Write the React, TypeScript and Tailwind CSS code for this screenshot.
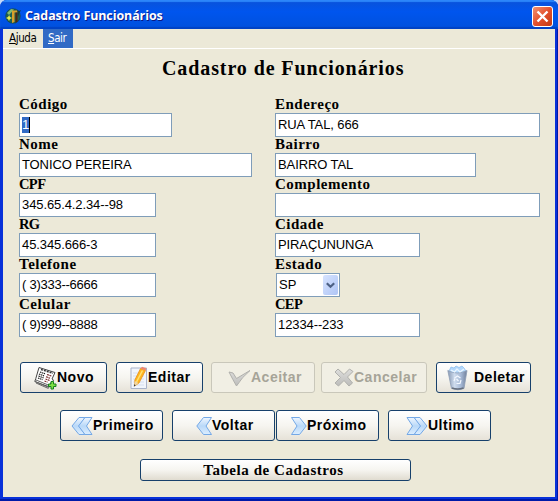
import React from "react";

const serif = "font-['Liberation_Serif',serif] font-bold text-black whitespace-nowrap";
const sans = "font-['Liberation_Sans',sans-serif]";

function Label({ text }: { text: string }) {
  const acronym = text === text.toUpperCase();
  return <div className={`${serif} h-4 leading-[14px] ${acronym ? "text-[14.5px] tracking-[-0.6px]" : "text-[15px] tracking-[0.5px]"}`}>{text}</div>;
}

function Field({ label, value, width, selected = false }: { label: string; value: string; width: string; selected?: boolean }) {
  const tracking = /^[(]/.test(value) ? "tracking-[-0.25px]" : "tracking-[-0.1px]";
  return (
    <div className="h-10">
      <Label text={label} />
      <div className={`${width} ${sans} ${tracking} flex h-6 items-center border border-[#7f9db9] bg-white pl-[2px] text-[13px] whitespace-pre text-black`}>
        {selected ? <span className="flex h-4 w-[8px] items-center justify-center border-r border-black bg-[#316ac5] text-white">{value}</span> : value}
      </div>
    </div>
  );
}

function Button({ children, label, width, disabled = false, pad }: { children: React.ReactNode; label: string; width: string; disabled?: boolean; pad: string }) {
  const look = disabled
    ? "border-[#c9c7ba] bg-[#f1efe4] text-[#a6a498]"
    : "border-[#17406b] bg-linear-to-b from-white via-[#f6f5f0] to-[#e6e2d8] text-black";
  return (
    <button className={`${width} ${pad} ${look} ${sans} flex h-[31px] shrink-0 items-center rounded-[3px] border text-[14px] font-bold tracking-[0.5px] whitespace-nowrap`}>
      {children}
      <span>{label}</span>
    </button>
  );
}

function Defs() {
  return (
    <svg width="0" height="0" className="absolute">
      <defs>
        <linearGradient id="chev" x1="0" y1="0" x2="0" y2="1">
          <stop offset="0" stopColor="#f0f7ff" />
          <stop offset="0.5" stopColor="#b9d8f8" />
          <stop offset="1" stopColor="#dceeff" />
        </linearGradient>
        <linearGradient id="gray" x1="0" y1="0" x2="0" y2="1">
          <stop offset="0" stopColor="#dededc" />
          <stop offset="1" stopColor="#bcbcba" />
        </linearGradient>
        <linearGradient id="bin" x1="0" y1="0" x2="1" y2="0">
          <stop offset="0" stopColor="#8798b2" />
          <stop offset="0.35" stopColor="#cfdcee" />
          <stop offset="0.7" stopColor="#a3b6d3" />
          <stop offset="1" stopColor="#6f7e98" />
        </linearGradient>
      </defs>
    </svg>
  );
}

function Chevrons({ double = false, right = false }: { double?: boolean; right?: boolean }) {
  const w = double ? 22 : 16;
  return (
    <svg width={w} height="20" viewBox={`0 0 ${w} 20`} className="shrink-0">
      <g transform={right ? `translate(${w} 0) scale(-1 1)` : undefined} fill="url(#chev)" stroke="#74a8e6" strokeWidth="1" strokeLinejoin="round">
        {double && <path d="M8 1.500h6L8 10l6 8.500H8L1 10Z" />}
        <path d={double ? "M14 1.500H21L15.500 10l5.500 8.500H14L7.500 10Z" : "M7.500 1.500H15.500L10 10l5.500 8.500H7.500L.8 10Z"} />
      </g>
    </svg>
  );
}

function NewsIcon() {
  return (
    <svg width="23" height="24" viewBox="0 0 23 24" className="shrink-0">
      <path d="M5 1.500L21 6.500l-3 6.500 1.500 1-4 7L.8 15.500l1-3Z" fill="#fff" stroke="#444" />
      <path d="M2 14l13.500 5.500 2-4M1 15.500L15 21.500M2 17l12.500 5.500" stroke="#666" fill="none" />
      <path d="M7 3.500l12 3.800" stroke="#333" strokeWidth="1.500" strokeDasharray="2 1" />
      <path d="M6 6l5 1.800M5 8l5 1.900M4.500 10l5 1.900M4 12l4.500 1.700" stroke="#111" strokeWidth="1.200" strokeDasharray="1.500 .6" />
      <path d="M13 8.500l4.500 1.600M12 10.700l4 1.500M11.500 13l4 1.500M10.500 15l3 1.200" stroke="#7a2c2c" strokeWidth="1.200" strokeDasharray="2 .6" />
      <path d="M17 15.500h2.500V18H22v2.500h-2.500V23H17v-2.500h-2.500V18H17Z" fill="#7fe044" stroke="#16811f" />
    </svg>
  );
}

function EditIcon() {
  return (
    <svg width="18" height="24" viewBox="0 0 18 24" className="shrink-0">
      <path d="M1 2h15.500v20.500H1Z" fill="#f1f5fc" stroke="#a9b3ca" />
      <path d="M3 7h11M3 10h11M3 13h11M3 16h11M3 19h11" stroke="#d6dff0" />
      <path d="M10.500 2.500l5 2L9 17l-4.500 3 .3-6Z" fill="#ffb51f" stroke="#e58912" strokeWidth=".7" />
      <path d="M12.500 4.500L6.500 16" stroke="#ffe374" strokeWidth="1.500" />
      <path d="M10.500 2.500L12 .8l4.500 1.700-1 2Z" fill="#ee8670" />
      <path d="M4.800 15l3.700 2-4.500 3.500Z" fill="#efd6a4" />
      <path d="M4.200 18.300l1.500 1-1.900 1.400Z" fill="#333" />
    </svg>
  );
}

function CheckIcon() {
  return (
    <svg width="23" height="18" viewBox="0 0 23 18" className="shrink-0">
      <path d="M1 3l4 1 3.500 5.500L22 1.500Q14 8 8.500 17 5 11 1 3Z" fill="url(#gray)" stroke="#b0b0ac" strokeLinejoin="round" />
    </svg>
  );
}

function CrossIcon() {
  return (
    <svg width="20" height="19" viewBox="0 0 20 19" className="shrink-0">
      <path d="M4 1l6 5.500L15.500 1 19 3.500 13.500 9l5 6-3.500 3-5-5.500L4.500 18 1 15l5.500-5.500L1 4Z" fill="url(#gray)" stroke="#b0b0ac" strokeLinejoin="round" />
    </svg>
  );
}

function BinIcon() {
  return (
    <svg width="21" height="26" viewBox="0 0 21 26" className="shrink-0">
      <path d="M2 6l2-4 3 1 2-2 3 1.500L15 1l2 2 2 3-1 3H3Z" fill="#b3d8fb" stroke="#86baec" strokeWidth=".7" />
      <path d="M.8 5.500q9 5 19.200 0l-3 18q-6 2.500-12.500 0Z" fill="url(#bin)" stroke="#8e9db5" strokeWidth=".8" />
      <path d="M4 5l3.500 2L10 4l3 3 4-3" stroke="#eaf5ff" strokeWidth="1.300" fill="none" />
      <path d="M5 23q5.500 2 11.500 0" stroke="#666f7e" fill="none" strokeWidth="1.600" />
      <path d="M7.500 13l3-2 3 2M14 15l-1 3.500H9.500M7 16l1-2.500M9.500 14l2 2" stroke="#f3f8ff" fill="none" strokeWidth="1.200" />
    </svg>
  );
}

function AppIcon() {
  return (
    <svg width="17" height="17" viewBox="0 0 17 17" className="shrink-0">
      <circle cx="8" cy="8" r="7.300" fill="#1d5f54" stroke="#17443f" strokeWidth=".6" />
      <path d="M2 5l4-4 3 .5L4 7Z" fill="#82bb70" />
      <path d="M7 2.500h6v2H9.500V14L7 15Z" fill="#d9a02a" />
      <path d="M10.500 4.500h2v9l-2 1.500Z" fill="#4e250f" />
      <path d="M1 10l2-1 1.200-2L5 9l2 1-2 1-1 2-1-2Z" fill="#e9ec48" />
      <path d="M12 1.500l2 1.500 2-1-2 4-1 3Z" fill="#143c3b" />
    </svg>
  );
}

export default function App() {
  return (
    <div className="h-[501px] w-[558px] overflow-hidden bg-[#c5d9f8]">
      <Defs />
      <div className="flex h-full flex-col overflow-hidden rounded-t-[7px] bg-[#0831d9] shadow-[inset_-1px_-2px_#0019a8]">
        <header className="flex h-[29px] shrink-0 items-center bg-linear-to-b from-[#0a52d8] via-[#0055ee] via-40% to-[#0050dc] pt-[3px] pr-[5px] pl-[5px] shadow-[inset_0_2px_1px_#2c86fa,inset_0_-2px_1px_#0042c4]">
          <AppIcon />
          <h1 className="ml-[3px] grow font-['Open_Sans',sans-serif] text-[12.500px] font-bold tracking-[-0.1px] whitespace-nowrap text-white [text-shadow:1px_1px_#0a1883]">Cadastro Funcionários</h1>
          <button className="flex h-[21px] w-[21px] items-center justify-center rounded-[3px] border border-white bg-linear-to-br from-[#f09070] via-[#e3502c] to-[#c33a12]">
            <svg width="13" height="13" viewBox="0 0 13 13" className="shrink-0"><path d="M1.500 1.500l10 10M11.500 1.500l-10 10" stroke="#fff" strokeWidth="2.400" /></svg>
          </button>
        </header>
        <div className="mr-[3px] mb-[4px] ml-[3px] flex grow flex-col bg-[#ece9d8]">
          <nav className="flex h-5 shrink-0 border-b border-white font-['DejaVu_Sans_Condensed','DejaVu_Sans',sans-serif] text-[11.5px] leading-[19px] font-[stretch:condensed] tracking-[-0.4px] text-black">
            <span className="w-10 pl-[6px]"><u>A</u>juda</span>
            <span className="h-[19px] w-[30px] bg-[#316ac5] pl-[5px] text-white"><u>S</u>air</span>
          </nav>
          <h2 className={`${serif} mt-[7px] ml-[159px] h-6 text-[20px] leading-[24px] tracking-[0.9px]`}>Cadastro de Funcionários</h2>
          <section className="mt-[17px] ml-4 flex h-[240px]">
            <div className="w-64">
              <Field label="Código" value="1" width="w-[153px]" selected />
              <Field label="Nome" value="TONICO PEREIRA" width="w-[233px]" />
              <Field label="CPF" value="345.65.4.2.34--98" width="w-[137px]" />
              <Field label="RG" value="45.345.666-3" width="w-[137px]" />
              <Field label="Telefone" value="( 3)333--6666" width="w-[137px]" />
              <Field label="Celular" value="( 9)999--8888" width="w-[137px]" />
            </div>
            <div>
              <Field label="Endereço" value="RUA TAL, 666" width="w-[265px]" />
              <Field label="Bairro" value="BAIRRO TAL" width="w-[201px]" />
              <Field label="Complemento" value="" width="w-[265px]" />
              <Field label="Cidade" value="PIRAÇUNUNGA" width="w-[145px]" />
              <div className="h-10">
                <Label text="Estado" />
                <div className={`${sans} ml-px flex h-6 w-16 items-center justify-between border border-[#7f9db9] bg-white pr-px pl-[2px] text-[13px] text-black`}>
                  SP
                  <span className="flex h-5 w-[15px] items-center justify-center rounded-[2px] bg-linear-to-br from-[#d6e3ff] to-[#afc5f5]">
                    <svg width="9" height="7" viewBox="0 0 9 7"><path d="M.8 1.200L4.500 4.800 8.200 1.200" fill="none" stroke="#4d6185" strokeWidth="2.200" /></svg>
                  </span>
                </div>
              </div>
              <Field label="CEP" value="12334--233" width="w-[145px]" />
            </div>
          </section>
          <div className="mt-[25px] ml-[17px] flex">
            <Button label="Novo" width="w-[87px]" pad="pl-[13px]"><NewsIcon /></Button>
            <div className="w-[9px]" />
            <Button label="Editar" width="w-[87px]" pad="pl-[13px]"><EditIcon /></Button>
            <div className="w-2" />
            <Button label="Aceitar" width="w-[104px]" pad="pl-[16px]" disabled><CheckIcon /></Button>
            <div className="w-[6px]" />
            <Button label="Cancelar" width="w-[106px]" pad="pl-[12px]" disabled><CrossIcon /></Button>
            <div className="w-[9px]" />
            <Button label="Deletar" width="w-[95px]" pad="pl-[10px]"><BinIcon /><i className="w-[6px]" /></Button>
          </div>
          <div className="mt-[17px] ml-[57px] flex">
            <Button label="Primeiro" width="w-[103px]" pad="pl-[10px]"><Chevrons double /></Button>
            <div className="w-[9px]" />
            <Button label="Voltar" width="w-[103px]" pad="pl-[23px]"><Chevrons /></Button>
            <div className="w-px" />
            <Button label="Próximo" width="w-[103px]" pad="pl-[14px]"><Chevrons right /></Button>
            <div className="w-[9px]" />
            <Button label="Ultimo" width="w-[103px]" pad="pl-[17px]"><Chevrons double right /></Button>
          </div>
          <button className={`${serif} mt-[18px] ml-[137px] h-[22px] w-[271px] rounded-[3px] border border-[#17406b] bg-linear-to-b from-white via-[#f6f5f0] to-[#e0dcd0] pr-[4px] text-[15px] leading-[20px] tracking-[0.55px]`}>Tabela de Cadastros</button>
        </div>
      </div>
    </div>
  );
}
